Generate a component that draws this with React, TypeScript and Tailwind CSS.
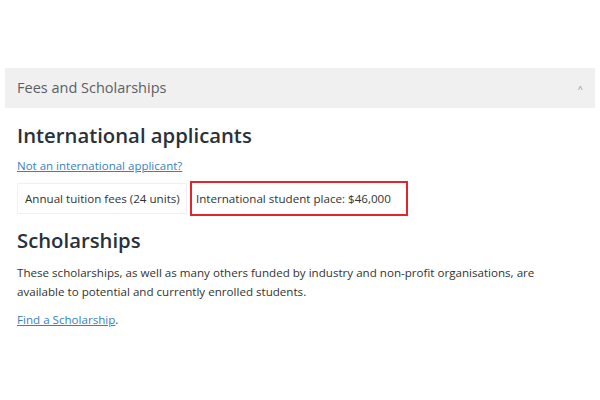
import React from 'react';

export default function App() {
  return (
    <div className="w-[600px] h-[400px] bg-white pt-[68px] px-[5px] font-['Open_Sans',sans-serif]">
      <div className="h-[40px] bg-[#f0f0f0] flex items-center justify-between pl-[12px] pr-[12px]">
        <span className="text-[14.5px] text-[#5a5f66]">Fees and Scholarships</span>
        <span className="text-[9px] text-[#8a8a8a] leading-none">^</span>
      </div>
      <div className="px-[12px]">
        <h2 className="mt-[12px] text-[20.3px] leading-[30px] font-semibold text-[#29313a]">International applicants</h2>
        <a className="block mt-[8px] text-[11.5px] leading-[16px] text-[#3a7fbf] underline">Not an international applicant?</a>
        <div className="mt-[7px] flex items-center">
          <div className="h-[31px] w-[170px] pl-[7px] border border-[#f0f0f0] flex items-center whitespace-nowrap text-[11.6px] text-[#333]">Annual tuition fees (24 units)</div>
          <div className="ml-[3px] h-[35px] w-[218px] px-[4px] border-2 border-[#e3262b] flex items-center whitespace-nowrap text-[11.6px] text-[#333]">International student place: $46,000</div>
        </div>
        <h2 className="mt-[9px] text-[20.3px] leading-[30px] font-semibold text-[#29313a]">Scholarships</h2>
        <p className="mt-[8px] text-[11.6px] leading-[19px] text-[#333]">
          These scholarships, as well as many others funded by industry and non-profit organisations, are<br />
          available to potential and currently enrolled students.
        </p>
        <p className="mt-[11px] text-[11.6px] leading-[16px] text-[#333]">
          <a className="text-[#3a7fbf] underline">Find a Scholarship</a>.
        </p>
      </div>
    </div>
  );
}
